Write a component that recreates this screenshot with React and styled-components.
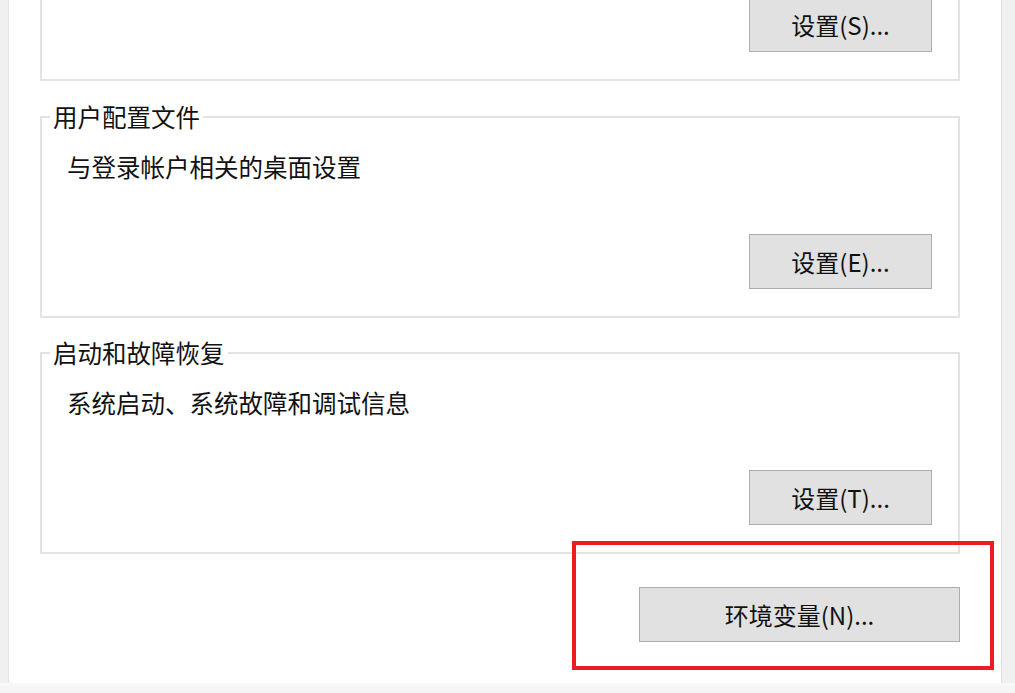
import React from 'react'
import styled, { createGlobalStyle } from 'styled-components'

const GlobalStyle = createGlobalStyle`
    html, body {
        margin: 0;
        padding: 0;
        background: #f0f0f0;
        overflow: hidden;
    }
    body {
        font-family: "Noto Sans CJK SC", "Noto Sans", "Liberation Sans", sans-serif;
        color: #111;
    }
`

const Window = styled.div`
    width: 1015px;
    height: 693px;
    display: flex;
    flex-direction: column;
    background: #f0f0f0;
`

const Panel = styled.div`
    position: relative;
    margin: 0 13px 0 8px;
    height: 683px;
    background: #fff;
    border-left: 1px solid #e3e3e3;
    border-right: 1px solid #e3e3e3;
    overflow: hidden;
`

const BottomStrip = styled.div`
    height: 10px;
    background: linear-gradient(#f9f9f9, #f3f3f3);
`

const Content = styled.div`
    margin-top: -5px;
    padding: 0 41px 0 31px;
    display: flex;
    flex-direction: column;
`

const Group = styled.fieldset`
    margin: 0 0 20px 0;
    padding: 0 26px 27px 8px;
    border: 2px solid #e3e3e3;
    display: flex;
    flex-direction: column;
    min-width: 0;

    & + & {
        margin-bottom: 19px;
    }
`

const Legend = styled.legend`
    padding: 0 3px;
    font-size: 24.5px;
    line-height: 31px;
`

const Description = styled.p`
    margin: 19px 0 52px 17px;
    font-size: 24.5px;
    line-height: 31px;
`

const Button = styled.button`
    align-self: flex-end;
    box-sizing: border-box;
    width: ${p => (p.$wide ? '321px' : '183px')};
    height: 55px;
    background: #e1e1e1;
    border: 1px solid #adadad;
    font-family: inherit;
    font-size: 24px;
    color: #111;
    padding: 0;
    cursor: default;
`

const Footer = styled.div`
    display: flex;
    justify-content: flex-end;
    margin-top: 14px;
`

const Highlight = styled.div`
    position: absolute;
    width: 422px;
    height: 129px;
    box-sizing: border-box;
    border: 4px solid #ed1c24;
    pointer-events: none;
`

// the top group is scrolled out of view; only its button shows
const groups = [
    { title: '用户配置文件', text: '与登录帐户相关的桌面设置', button: '设置(E)...' },
    { title: '启动和故障恢复', text: '系统启动、系统故障和调试信息', button: '设置(T)...' },
]

const App = () => (
    <Window>
        <GlobalStyle />
        <Panel>
            <Content>
                <Group>
                    <Button>设置(S)...</Button>
                </Group>
                {groups.map(g => (
                    <Group key={g.title}>
                        <Legend>{g.title}</Legend>
                        <Description>{g.text}</Description>
                        <Button>{g.button}</Button>
                    </Group>
                ))}
                <Footer>
                    <Button $wide>环境变量(N)...</Button>
                </Footer>
            </Content>
            <Highlight style={{ left: 563, top: 541 }} />
        </Panel>
        <BottomStrip />
    </Window>
)

export default App
